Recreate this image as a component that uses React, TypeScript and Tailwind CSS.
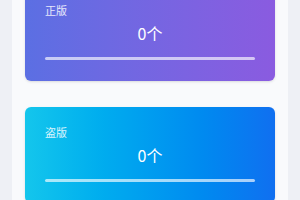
const cards = [
  { label: "正版", value: "0个", bg: "bg-gradient-to-r from-[#5b6fe3] to-[#8a5be0]" },
  { label: "盗版", value: "0个", bg: "bg-gradient-to-r from-[#14c6ec] to-[#106ff0]" },
];

const App = () => {
  return (
    <div className="h-[200px] w-[300px] overflow-hidden bg-[#eef0f5] px-3 font-['Noto_Sans_CJK_SC',sans-serif]">
      <div className="-mt-[15px] flex flex-col gap-[26px] bg-[#f9fafc] px-[13px] pb-6">
        {cards.map((c) => (
          <div
            key={c.label}
            className={`${c.bg} rounded-md px-5 pt-[19px] pb-[21px] text-white shadow-sm`}
          >
            <div className="text-[11px] leading-[13px] text-white/85">{c.label}</div>
            <div className="mt-[6px] text-center text-[16px] leading-[20px]">{c.value}</div>
            <div className="mt-[14px] h-[3px] rounded-full bg-white/65" />
          </div>
        ))}
      </div>
    </div>
  );
};

export default App;
